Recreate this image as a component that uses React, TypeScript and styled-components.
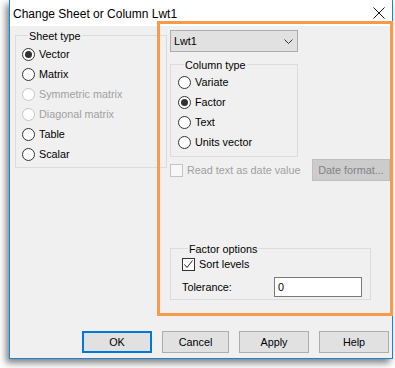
import React from "react";
import styled, { createGlobalStyle } from "styled-components";

const Global = createGlobalStyle`
  html, body { margin: 0; padding: 0; background: #ffffff; }
  body { font-family: "Liberation Sans", Arial, sans-serif; font-size: 10.8px; color: #000; }
  * { box-sizing: border-box; }
`;

const Page = styled.div`
  position: relative;
  width: 395px;
  height: 368px;
  overflow: hidden;
`;

const Window = styled.div`
  margin-left: 9px;
  width: 384px;
  height: 359px;
  border: 1px solid #1883d7;
  border-top: none;
  background: #f0f0f0;
  display: flex;
  flex-direction: column;
  box-shadow: -3px 4px 7px rgba(0, 0, 0, 0.5);
`;

const TitleBar = styled.div`
  height: 26px;
  flex: none;
  background: #ffffff;
  display: flex;
  align-items: center;
  justify-content: space-between;
  padding: 0 7px 0 3px;
`;

const Title = styled.span`
  font-size: 12px;
  color: #000;
  padding-top: 1px;
`;

const Body = styled.div`
  flex: 1;
  display: flex;
  align-items: flex-start;
  gap: 3px;
  padding: 4px 0 0 5px;
`;

const Group = styled.div<{ $w: number; $pb: number; $pl: number }>`
  width: ${(p) => p.$w}px;
  border: 1px solid #dcdcdc;
  padding: 0 0 ${(p) => p.$pb}px ${(p) => p.$pl}px;
  display: flex;
  flex-direction: column;
`;

const Legend = styled.div<{ $ml: number }>`
  align-self: flex-start;
  margin: -7px 0 0 ${(p) => p.$ml}px;
  padding: 0 1px;
  height: 14px;
  line-height: 14px;
  background: #f0f0f0;
`;

const LeftCol = styled.div`
  margin-top: 5px;
`;

const RightCol = styled.div`
  width: 220px;
  display: flex;
  flex-direction: column;
  align-items: flex-start;
`;

const Spacer = styled.div<{ $h: number }>`
  margin-top: ${(p) => p.$h}px;
`;

const RadioRow = styled.div<{ $disabled?: boolean }>`
  height: 20px;
  display: flex;
  align-items: center;
  gap: 4px;
  color: ${(p) => (p.$disabled ? "#a0a0a0" : "#000")};
`;

const RadioCircle = styled.span<{ $checked?: boolean; $disabled?: boolean }>`
  width: 13px;
  height: 13px;
  border-radius: 50%;
  border: 1px solid ${(p) => (p.$disabled ? "#c4c4c4" : "#333333")};
  background: #ffffff;
  display: flex;
  align-items: center;
  justify-content: center;
  flex: none;
  &::after {
    content: "";
    display: ${(p) => (p.$checked ? "block" : "none")};
    width: 7px;
    height: 7px;
    border-radius: 50%;
    background: #333333;
  }
`;

const Combo = styled.div`
  width: 128px;
  height: 22px;
  background: #e1e1e1;
  border: 1px solid #adadad;
  display: flex;
  align-items: center;
  justify-content: space-between;
  padding: 0 4px 0 3px;
`;

const Box = styled.span<{ $disabled?: boolean }>`
  width: 13px;
  height: 13px;
  flex: none;
  border: 1px solid ${(p) => (p.$disabled ? "#c4c4c4" : "#333333")};
  background: ${(p) => (p.$disabled ? "#f7f7f7" : "#ffffff")};
  display: flex;
  align-items: center;
  justify-content: center;
`;

const CheckRow = styled.div<{ $disabled?: boolean; $h: number }>`
  height: ${(p) => p.$h}px;
  display: flex;
  align-items: center;
  gap: 4px;
  color: ${(p) => (p.$disabled ? "#a0a0a0" : "#000")};
`;

const DateRow = styled.div`
  margin-top: 2px;
  width: 220px;
  height: 22px;
  display: flex;
  align-items: center;
  justify-content: space-between;
`;

const Button = styled.div<{ $w: number; $default?: boolean; $disabled?: boolean }>`
  width: ${(p) => p.$w}px;
  height: 22px;
  display: flex;
  align-items: center;
  justify-content: center;
  background: ${(p) => (p.$disabled ? "#cccccc" : "#e1e1e1")};
  border: ${(p) => (p.$default ? "2px solid #0078d7" : p.$disabled ? "1px solid #bfbfbf" : "1px solid #adadad")};
  color: ${(p) => (p.$disabled ? "#838383" : "#000")};
`;

const ToleranceRow = styled.div`
  margin-top: 5px;
  height: 20px;
  display: flex;
  align-items: center;
`;

const Label = styled.span`
  width: 92px;
`;

const Input = styled.div`
  width: 88px;
  height: 20px;
  background: #ffffff;
  border: 1px solid #7a7a7a;
  display: flex;
  align-items: center;
  padding-left: 3px;
`;

const Footer = styled.div`
  flex: none;
  display: flex;
  justify-content: flex-end;
  gap: 10px;
  padding: 0 3px 5px 0;
`;

const Highlight = styled.div`
  position: absolute;
  left: 157px;
  top: 21px;
  width: 236px;
  height: 295px;
  border: 3px solid #f79a4a;
  pointer-events: none;
`;

const Radio = ({ label, checked, disabled }: { label: string; checked?: boolean; disabled?: boolean }) => (
  <RadioRow $disabled={disabled}>
    <RadioCircle $checked={checked} $disabled={disabled} />
    <span>{label}</span>
  </RadioRow>
);

export default function App() {
  return (
    <Page>
      <Global />
      <Window>
        <TitleBar>
          <Title>Change Sheet or Column Lwt1</Title>
          <svg width="12" height="12" viewBox="0 0 12 12">
            <path d="M0.5 0.5 L11.5 11.5 M11.5 0.5 L0.5 11.5" stroke="#111" strokeWidth="1" fill="none" />
          </svg>
        </TitleBar>
        <Body>
          <LeftCol>
            <Group $w={152} $pb={3} $pl={6}>
              <Legend $ml={6}>Sheet type</Legend>
              <Spacer $h={1} />
              <Radio label="Vector" checked />
              <Radio label="Matrix" />
              <Radio label="Symmetric matrix" disabled />
              <Radio label="Diagonal matrix" disabled />
              <Radio label="Table" />
              <Radio label="Scalar" />
            </Group>
          </LeftCol>
          <RightCol>
            <Combo>
              <span>Lwt1</span>
              <svg width="9" height="5" viewBox="0 0 9 5">
                <path d="M0.5 0.5 L4.5 4.5 L8.5 0.5" stroke="#333" strokeWidth="1" fill="none" />
              </svg>
            </Combo>
            <Spacer $h={12}>
              <Group $w={128} $pb={4} $pl={7}>
                <Legend $ml={6}>Column type</Legend>
                <Radio label="Variate" />
                <Radio label="Factor" checked />
                <Radio label="Text" />
                <Radio label="Units vector" />
              </Group>
            </Spacer>
            <DateRow>
              <CheckRow $disabled $h={22}>
                <Box $disabled />
                <span>Read text as date value</span>
              </CheckRow>
              <Button $w={78} $disabled>Date format...</Button>
            </DateRow>
            <Spacer $h={67}>
              <Group $w={201} $pb={2} $pl={11}>
                <Legend $ml={6}>Factor options</Legend>
                <CheckRow $h={16}>
                  <Box>
                    <svg width="11" height="11" viewBox="0 0 11 11">
                      <path d="M1.5 5.5 L4 8.5 L9.5 1.5" stroke="#222" strokeWidth="1" fill="none" />
                    </svg>
                  </Box>
                  <span>Sort levels</span>
                </CheckRow>
                <ToleranceRow>
                  <Label>Tolerance:</Label>
                  <Input>0</Input>
                </ToleranceRow>
              </Group>
            </Spacer>
          </RightCol>
        </Body>
        <Footer>
          <Button $w={70} $default>OK</Button>
          <Button $w={67}>Cancel</Button>
          <Button $w={70}>Apply</Button>
          <Button $w={70}>Help</Button>
        </Footer>
      </Window>
      <Highlight />
    </Page>
  );
}
